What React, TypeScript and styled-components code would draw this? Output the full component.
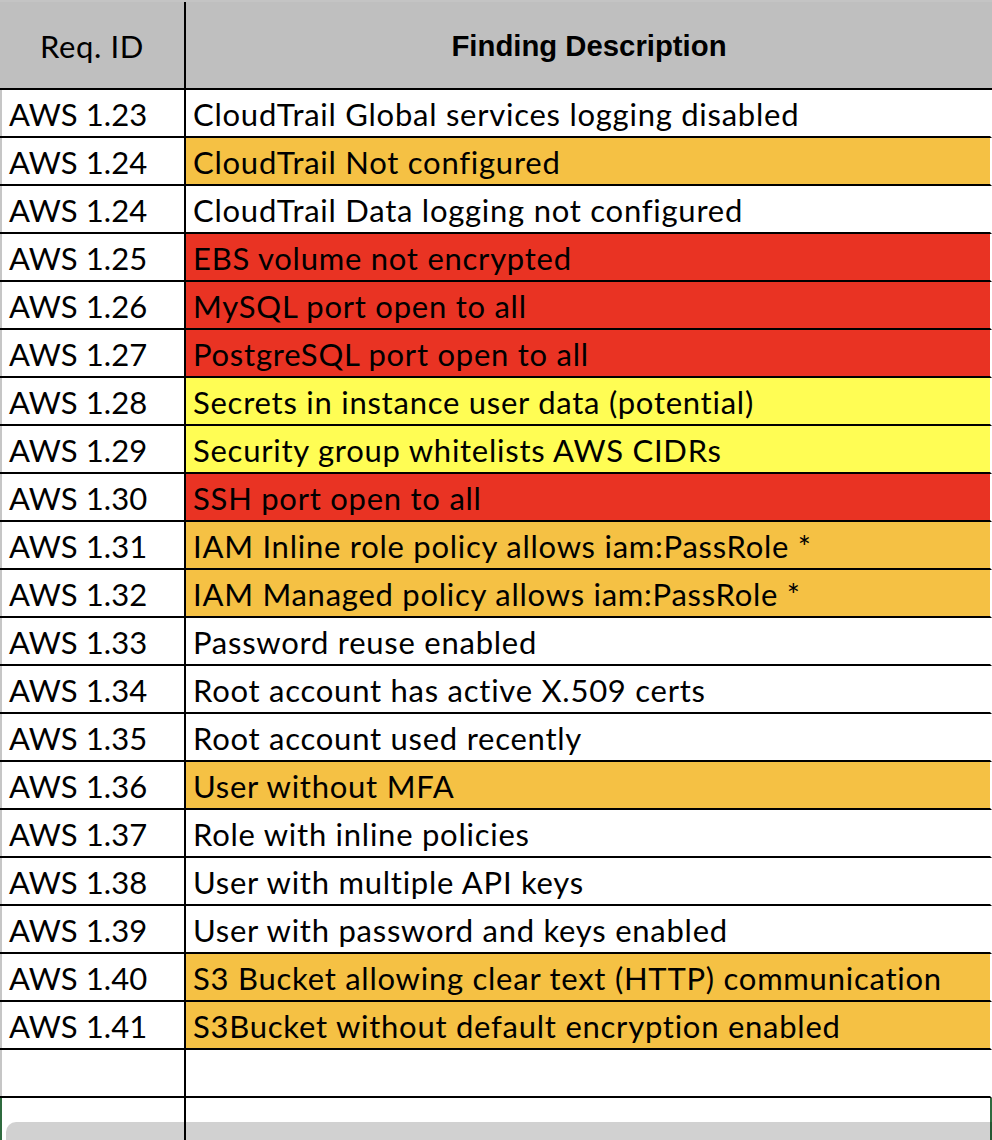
import { FC } from "react";
import styled, { createGlobalStyle } from "styled-components";

type Severity = "none" | "medium" | "high" | "low";

type Finding = {
  id: string;
  description: string;
  severity: Severity;
};

const findings: Finding[] = [
  { id: "AWS 1.23", description: "CloudTrail Global services logging disabled", severity: "none" },
  { id: "AWS 1.24", description: "CloudTrail Not configured", severity: "medium" },
  { id: "AWS 1.24", description: "CloudTrail Data logging not configured", severity: "none" },
  { id: "AWS 1.25", description: "EBS volume not encrypted", severity: "high" },
  { id: "AWS 1.26", description: "MySQL port open to all", severity: "high" },
  { id: "AWS 1.27", description: "PostgreSQL port open to all", severity: "high" },
  { id: "AWS 1.28", description: "Secrets in instance user data (potential)", severity: "low" },
  { id: "AWS 1.29", description: "Security group whitelists AWS CIDRs", severity: "low" },
  { id: "AWS 1.30", description: "SSH port open to all", severity: "high" },
  { id: "AWS 1.31", description: "IAM Inline role policy allows iam:PassRole *", severity: "medium" },
  { id: "AWS 1.32", description: "IAM Managed policy allows iam:PassRole *", severity: "medium" },
  { id: "AWS 1.33", description: "Password reuse enabled", severity: "none" },
  { id: "AWS 1.34", description: "Root account has active X.509 certs", severity: "none" },
  { id: "AWS 1.35", description: "Root account used recently", severity: "none" },
  { id: "AWS 1.36", description: "User without MFA", severity: "medium" },
  { id: "AWS 1.37", description: "Role with inline policies", severity: "none" },
  { id: "AWS 1.38", description: "User with multiple API keys", severity: "none" },
  { id: "AWS 1.39", description: "User with password and keys enabled", severity: "none" },
  { id: "AWS 1.40", description: "S3 Bucket allowing clear text (HTTP) communication", severity: "medium" },
  { id: "AWS 1.41", description: "S3Bucket without default encryption enabled", severity: "medium" },
];

const fills: Record<Severity, string> = {
  none: "#ffffff",
  medium: "#f5c144",
  high: "#e93323",
  low: "#fffd54",
};

const GlobalStyle = createGlobalStyle`
  html, body {
    margin: 0;
    padding: 0;
    background: #ffffff;
    overflow: hidden;
  }
  * {
    box-sizing: border-box;
  }
`;

const Sheet = styled.div`
  position: relative;
  width: 992px;
  height: 1140px;
  overflow: hidden;
  background: #ffffff;
  font-family: Lato, "Open Sans", sans-serif;
  font-variant-ligatures: none;
  color: #000000;
`;

const Row = styled.div<{ $selected?: boolean }>`
  display: grid;
  grid-template-columns: 186px 1fr;
  height: 48px;
  border-bottom: 2px solid #000000;
  border-right: 2px solid ${(p) => (p.$selected ? "#2f6b3f" : "transparent")};
`;

const HeaderRow = styled.div`
  display: grid;
  grid-template-columns: 186px 1fr;
  height: 90px;
  background: #bfbfbf;
  border-top: 2px solid #c4c4c4;
  border-bottom: 2px solid #000000;
`;

const HeaderCell = styled.div<{ $bold?: boolean }>`
  display: flex;
  align-items: center;
  justify-content: center;
  padding-top: 2px;
  font-family: ${(p) =>
    p.$bold ? `"Liberation Sans", Arial, sans-serif` : `Lato, "Open Sans", sans-serif`};
  font-weight: ${(p) => (p.$bold ? 700 : 400)};
  font-size: ${(p) => (p.$bold ? "29.3px" : "31px")};
  letter-spacing: ${(p) => (p.$bold ? "0" : "0.6px")};
  border-right: ${(p) => (p.$bold ? "none" : "2px solid #000000")};
`;

const IdCell = styled.div<{ $selected?: boolean }>`
  display: flex;
  align-items: center;
  padding: 2px 0 0 7px;
  font-size: 31px;
  letter-spacing: 0.1px;
  white-space: nowrap;
  border-left: 2px solid ${(p) => (p.$selected ? "#2f6b3f" : "#c6c6c6")};
  border-right: 2px solid #000000;
`;

const DescCell = styled.div<{ $fill: string }>`
  display: flex;
  align-items: center;
  padding: 2px 0 0 7px;
  font-size: 31px;
  letter-spacing: 0.75px;
  white-space: nowrap;
  background: ${(p) => p.$fill};
`;

const ScrollThumb = styled.div`
  position: absolute;
  left: 6px;
  right: -20px;
  bottom: -10px;
  height: 28px;
  border-radius: 10px;
  background: rgba(0, 0, 0, 0.18);
`;

type FindingRowProps = {
  finding: Finding;
};

const FindingRow: FC<FindingRowProps> = ({ finding }) => (
  <Row>
    <IdCell>{finding.id}</IdCell>
    <DescCell $fill={fills[finding.severity]}>{finding.description}</DescCell>
  </Row>
);

const App: FC = () => {
  return (
    <>
      <GlobalStyle />
      <Sheet>
        <HeaderRow>
          <HeaderCell>Req. ID</HeaderCell>
          <HeaderCell $bold>Finding Description</HeaderCell>
        </HeaderRow>
        {findings.map((f, i) => (
          <FindingRow key={i} finding={f} />
        ))}
        {/* empty rows below the list */}
        <Row>
          <IdCell />
          <DescCell $fill="#ffffff" />
        </Row>
        <Row $selected>
          <IdCell $selected />
          <DescCell $fill="#ffffff" />
        </Row>
        <ScrollThumb />
      </Sheet>
    </>
  );
};

export default App;
